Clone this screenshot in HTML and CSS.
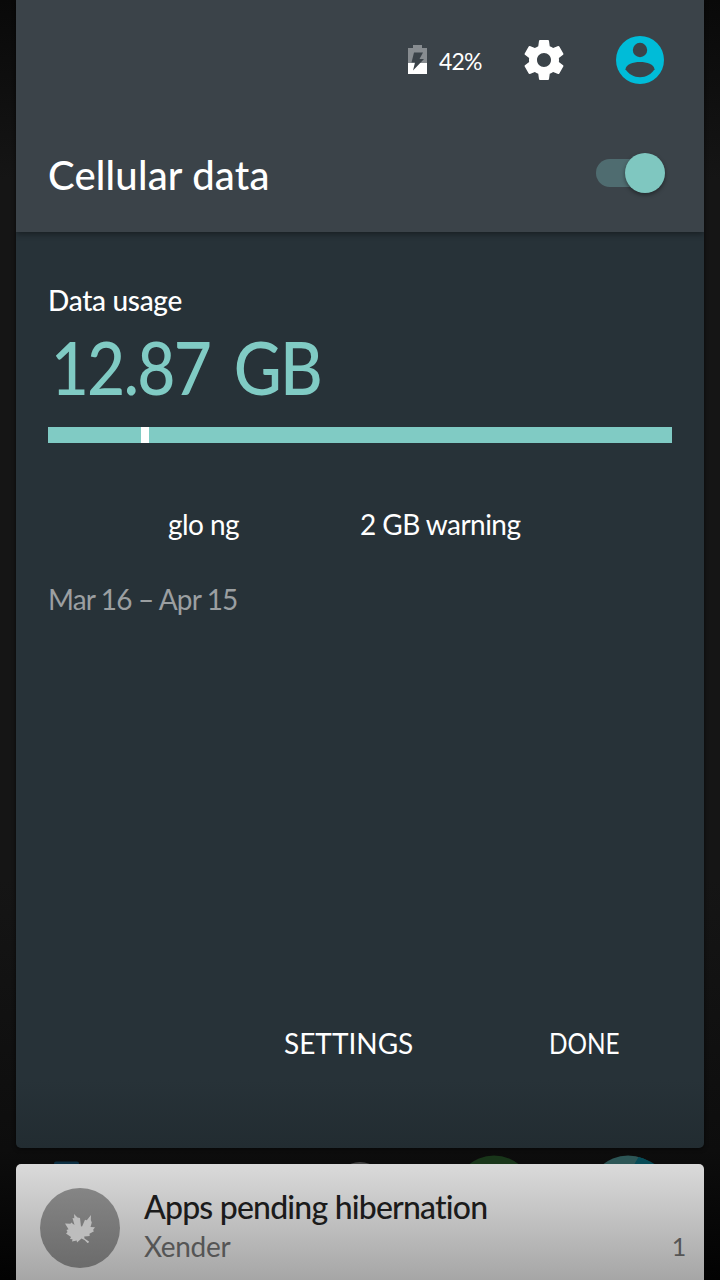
FILE: index.html
```
<!DOCTYPE html>
<html lang="en">
<head>
    <meta charset="UTF-8">
    <meta name="viewport" content="width=device-width, initial-scale=1.0">
    <title>Cellular data</title>
    <link rel="stylesheet" href="styles.css">
</head>
<body>
    <main class="panel">
        <header class="panel-header">
            <div class="status-row">
                <div class="battery">
                    <svg class="battery-icon" viewBox="0 0 19 29">
                        <path fill="#878c90" d="M5 0h9v3h5v15H0V3h5z"/>
                        <path fill="#fff" d="M0 18h19v11H0z"/>
                        <path fill="#3b4349" d="M6 7.500h9l-3.500 6.500h4.500L5 25.500l2-8H3.500z"/>
                    </svg>
                    <span class="battery-level">42%</span>
                </div>
                <svg class="settings-icon" viewBox="0 0 24 24">
                    <path fill="#fff" d="M19.43 12.98c.04-.32.07-.64.07-.98s-.03-.66-.07-.98l2.11-1.65c.19-.15.24-.42.12-.64l-2-3.46c-.12-.22-.39-.3-.61-.22l-2.49 1c-.52-.4-1.08-.73-1.69-.98l-.38-2.65C14.46 2.18 14.25 2 14 2h-4c-.25 0-.46.18-.49.42l-.38 2.65c-.61.25-1.17.59-1.69.98l-2.49-1c-.23-.09-.49 0-.61.22l-2 3.46c-.13.22-.07.49.12.64l2.11 1.65c-.04.32-.07.65-.07.98s.03.66.07.98l-2.11 1.65c-.19.15-.24.42-.12.64l2 3.46c.12.22.39.3.61.22l2.49-1c.52.4 1.08.73 1.69.98l.38 2.65c.03.24.24.42.49.42h4c.25 0 .46-.18.49-.42l.38-2.65c.61-.25 1.17-.59 1.69-.98l2.49 1c.23.09.49 0 .61-.22l2-3.46c.12-.22.07-.49-.12-.64l-2.11-1.65zM12 15.5c-1.93 0-3.5-1.57-3.5-3.5s1.57-3.5 3.5-3.5 3.5 1.57 3.5 3.5-1.57 3.5-3.5 3.5z"/>
                </svg>
                <svg class="user-icon" viewBox="0 0 48 48">
                    <circle cx="24" cy="24" r="24" fill="#00bcd8"/>
                    <circle cx="24" cy="14" r="7.2" fill="#3b4349"/>
                    <path fill="#3b4349" d="M9.5 33.2C10 28.5 17 26 24 26s14 2.500 14.500 7.200C35.500 38 30 41.200 24 41.200S12.500 38 9.500 33.200z"/>
                </svg>
            </div>
            <div class="title-row">
                <h1>Cellular data</h1>
                <div class="toggle"><span class="toggle-thumb"></span></div>
            </div>
        </header>
        <section class="usage">
            <h2>Data usage</h2>
            <div class="usage-total">12.87 GB</div>
            <div class="usage-bar"><span class="usage-marker"></span></div>
            <div class="usage-info">
                <span class="carrier">glo ng</span>
                <span class="warning">2 GB warning</span>
            </div>
            <div class="period">Mar 16 – Apr 15</div>
        </section>
        <footer class="actions">
            <a class="settings-link">SETTINGS</a>
            <a class="done-link">DONE</a>
        </footer>
    </main>
    <div class="wallpaper">
        <svg viewBox="0 0 720 16">
            <rect x="54" y="13.500" width="25" height="6" rx="2" fill="#0d2f43"/>
            <circle cx="360" cy="38" r="24" fill="#454545"/>
            <circle cx="494" cy="47" r="39.500" fill="#19361a"/>
            <circle cx="628" cy="47" r="39.500" fill="#2d5656"/>
            <path fill="#064b57" d="M638.500 9c6 1.500 11 4 16 7h-20z"/>
        </svg>
    </div>
    <article class="notification">
        <div class="notification-icon">
            <svg viewBox="0 0 32 30">
                <path fill="#bdbdbd" d="M10 1l3.500 3.500 2.500.5 1 8.500 1.200-.2 2.800-6.500 1.800.5L27 2l-.2 5 1 2.500-1.300 4.500 4.500.2-2 2.800 1 1.200-4.500 2.500.2 2.300-5.500.5.300 2 4.500 3-1 2-3.500-3.500-3-1.500-4.500 4-.3-2-4.700 1 .5-2.200-2.500-.3 1-2L2 20.500l1.500-1.500-1-2 2-.8L1 10.500l5.500.3.700-1.300 3.300 2.500-2-7 1.800.3z"/>
            </svg>
        </div>
        <div class="notification-text">
            <div class="notification-title">Apps pending hibernation</div>
            <div class="notification-detail">
                <span class="app-name">Xender</span>
                <span class="app-count">1</span>
            </div>
        </div>
    </article>
</body>
</html>
```
FILE: styles.css
```
:root {
    --header: #3b4349;
    --surface: #273238;
    --accent: #80cbc4;
}

* {
    margin: 0;
    padding: 0;
    box-sizing: border-box;
}

body {
    font-family: Lato, "Open Sans", sans-serif;
    font-variant-ligatures: none;
    width: 720px;
    height: 1280px;
    padding: 0 16px;
    overflow: hidden;
    color: #fff;
    background: linear-gradient(#090909 0, #151515 180px, #151515 880px, #0d0d0d 1150px, #020202 1280px);
}

svg {
    display: block;
}

h1, h2 {
    font-weight: 500;
}

.panel {
    height: 1148px;
    display: flex;
    flex-direction: column;
    border-radius: 0 0 5px 5px;
    overflow: hidden;
    background: linear-gradient(var(--surface) 1080px, #222c31 1148px);
    box-shadow: 0 1px 4px rgba(0, 0, 0, 0.6);
}

.panel-header {
    height: 232px;
    background: var(--header);
    box-shadow: 0 2px 6px rgba(0, 0, 0, 0.4);
}

.status-row {
    height: 120px;
    padding-right: 40px;
    display: flex;
    justify-content: flex-end;
    align-items: center;
}

.battery {
    display: flex;
    align-items: center;
    gap: 12px;
    width: 112px;
    padding-bottom: 2px;
}

.battery-icon {
    width: 19px;
    height: 29px;
}

.battery-level {
    font-size: 23px;
    letter-spacing: -0.8px;
    padding-top: 4px;
}

.settings-icon {
    width: 48px;
    height: 48px;
    margin-right: 48px;
}

.user-icon {
    width: 48px;
    height: 48px;
}

.title-row {
    height: 106px;
    padding: 0 39px 0 32px;
    display: flex;
    justify-content: space-between;
    align-items: center;
}

h1 {
    font-size: 40px;
    line-height: 48px;
    letter-spacing: 0.2px;
    padding-top: 4px;
}

.toggle {
    width: 69px;
    height: 28px;
    border-radius: 14px;
    background: linear-gradient(90deg, #4f6c70 50px, transparent 50px);
    display: flex;
    justify-content: flex-end;
    align-items: center;
}

.toggle-thumb {
    width: 40px;
    height: 40px;
    border-radius: 50%;
    background: #7fc7c0;
    box-shadow: 0 2px 4px rgba(0, 0, 0, 0.4);
}

.usage {
    flex: 1;
    padding: 51px 32px 0;
}

h2 {
    font-size: 28px;
    line-height: 34px;
    letter-spacing: -0.3px;
}

.usage-total {
    font-size: 74px;
    font-weight: 500;
    line-height: 90px;
    letter-spacing: -2px;
    word-spacing: 10px;
    transform: scaleX(0.89);
    transform-origin: left;
    margin-top: 5px;
    padding-left: 3px;
    color: var(--accent);
}

.usage-bar {
    height: 16px;
    margin-top: 15px;
    padding-left: 93px;
    background: var(--accent);
}

.usage-marker {
    display: block;
    width: 8px;
    height: 16px;
    background: #fff;
}

.usage-info {
    display: flex;
    margin-top: 64px;
    font-size: 28px;
    line-height: 34px;
    letter-spacing: -0.55px;
}

.carrier {
    width: 312px;
    padding-left: 120px;
}

.period {
    margin-top: 41px;
    font-size: 28px;
    line-height: 34px;
    letter-spacing: -0.85px;
    color: #9b9fa1;
}

.actions {
    height: 148px;
    padding: 26px 84px 0 0;
    display: flex;
    justify-content: flex-end;
    font-size: 28px;
    line-height: 34px;
}

.settings-link {
    width: 265px;
}

.done-link {
    width: 71px;
    transform: scaleX(0.87);
    transform-origin: left;
}

.wallpaper {
    height: 16px;
    margin: 0 -16px;
    overflow: hidden;
}

.notification {
    height: 116px;
    padding: 24px 18px 0 24px;
    display: flex;
    gap: 24px;
    border-radius: 5px 5px 0 0;
    background: linear-gradient(#dadada, #a6a6a6);
}

.notification-icon {
    width: 80px;
    height: 80px;
    border-radius: 50%;
    background: linear-gradient(#858585, #6b6b6b);
    display: flex;
    justify-content: center;
    align-items: center;
}

.notification-icon svg {
    width: 32px;
    height: 30px;
}

.notification-text {
    flex: 1;
}

.notification-title {
    font-size: 32px;
    font-weight: 500;
    line-height: 38px;
    letter-spacing: -0.8px;
    color: #1b1b1b;
}

.notification-detail {
    display: flex;
    justify-content: space-between;
    margin-top: 3px;
    font-size: 28px;
    line-height: 34px;
    letter-spacing: -0.3px;
    color: #555;
}

.app-count {
    font-size: 25px;
}
```
